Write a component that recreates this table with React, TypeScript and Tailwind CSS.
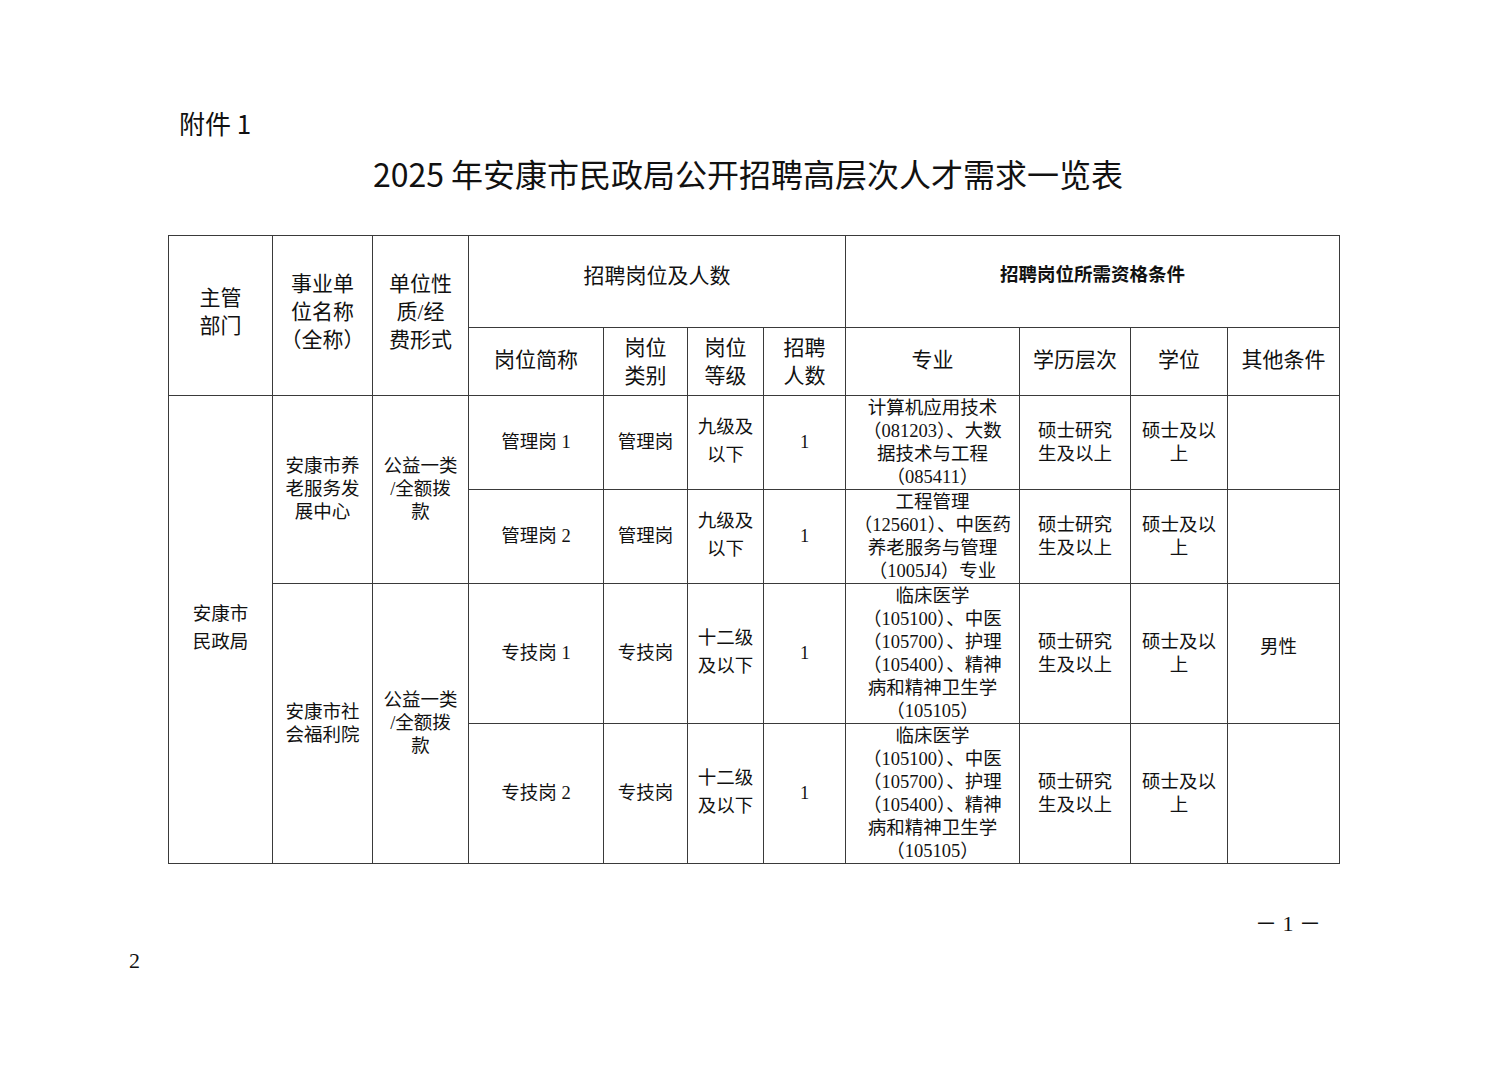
const serif = { fontFamily: '"Liberation Serif", "Noto Sans CJK SC", serif' };

const cell = "border border-[#3a3a3a] text-center align-middle p-0";

function Lines({ lines }: { lines: string[] }) {
  return (
    <>
      {lines.map((l, i) => (
        <div key={i}>{l}</div>
      ))}
    </>
  );
}

const medical = [
  "临床医学",
  "（105100）、中医",
  "（105700）、护理",
  "（105400）、精神",
  "病和精神卫生学",
  "（105105）",
];

export default function App() {
  return (
    <div className="w-full h-[1080px] bg-white text-[#111] overflow-hidden" style={{ fontFamily: '"Noto Sans CJK SC", sans-serif' }}>
      <div className="pt-[103px] pl-[179px] text-[26px] leading-[40px]">附件 1</div>

      <h1 className="mt-[8px] text-center text-[32px] leading-[44px] font-normal pr-[11px]">
        2025 年安康市民政局公开招聘高层次人才需求一览表
      </h1>

      <div className="mt-[40px] pl-[168px]">
        <table className="table-fixed border-collapse w-[1171px] text-[18.5px] leading-[23px]" style={serif}>
          <colgroup>
            <col className="w-[104px]" />
            <col className="w-[100px]" />
            <col className="w-[96px]" />
            <col className="w-[135px]" />
            <col className="w-[84px]" />
            <col className="w-[76px]" />
            <col className="w-[82px]" />
            <col className="w-[174px]" />
            <col className="w-[111px]" />
            <col className="w-[97px]" />
            <col className="w-[112px]" />
          </colgroup>
          <thead>
            <tr className="h-[92px]">
              <th rowSpan={2} className={`${cell} font-normal text-[21px] leading-[28px] pb-[8px]`}>
                <Lines lines={["主管", "部门"]} />
              </th>
              <th rowSpan={2} className={`${cell} font-normal text-[21px] leading-[28px] pb-[8px]`}>
                <Lines lines={["事业单", "位名称", "（全称）"]} />
              </th>
              <th rowSpan={2} className={`${cell} font-normal text-[21px] leading-[28px] pb-[8px]`}>
                <Lines lines={["单位性", "质/经", "费形式"]} />
              </th>
              <th colSpan={4} className={`${cell} font-normal text-[21px] leading-[28px] pb-[12px]`}>
                招聘岗位及人数
              </th>
              <th colSpan={4} className={`${cell} font-bold text-[18.5px] pb-[12px]`}>
                招聘岗位所需资格条件
              </th>
            </tr>
            <tr className="h-[68px] text-[21px] leading-[28px]">
              <th className={`${cell} font-normal pb-[4px]`}>岗位简称</th>
              <th className={`${cell} font-normal`}>
                <Lines lines={["岗位", "类别"]} />
              </th>
              <th className={`${cell} font-normal`}>
                <Lines lines={["岗位", "等级"]} />
              </th>
              <th className={`${cell} font-normal`}>
                <Lines lines={["招聘", "人数"]} />
              </th>
              <th className={`${cell} font-normal pb-[4px]`}>专业</th>
              <th className={`${cell} font-normal pb-[4px]`}>学历层次</th>
              <th className={`${cell} font-normal pb-[4px]`}>学位</th>
              <th className={`${cell} font-normal pb-[4px]`}>其他条件</th>
            </tr>
          </thead>
          <tbody>
            <tr className="h-[94px]">
              <td rowSpan={4} className={`${cell} leading-[28px] pb-[4px]`}>
                <Lines lines={["安康市", "民政局"]} />
              </td>
              <td rowSpan={2} className={cell}>
                <Lines lines={["安康市养", "老服务发", "展中心"]} />
              </td>
              <td rowSpan={2} className={cell}>
                <Lines lines={["公益一类", "/全额拨", "款"]} />
              </td>
              <td className={cell}>管理岗 1</td>
              <td className={cell}>管理岗</td>
              <td className={`${cell} leading-[28px] pb-[4px]`}>
                <Lines lines={["九级及", "以下"]} />
              </td>
              <td className={cell}>1</td>
              <td className={cell}>
                <Lines lines={["计算机应用技术", "（081203）、大数", "据技术与工程", "（085411）"]} />
              </td>
              <td className={cell}>
                <Lines lines={["硕士研究", "生及以上"]} />
              </td>
              <td className={cell}>
                <Lines lines={["硕士及以", "上"]} />
              </td>
              <td className={cell}></td>
            </tr>
            <tr className="h-[94px]">
              <td className={cell}>管理岗 2</td>
              <td className={cell}>管理岗</td>
              <td className={`${cell} leading-[28px] pb-[4px]`}>
                <Lines lines={["九级及", "以下"]} />
              </td>
              <td className={cell}>1</td>
              <td className={cell}>
                <Lines lines={["工程管理", "（125601）、中医药", "养老服务与管理", "（1005J4）专业"]} />
              </td>
              <td className={cell}>
                <Lines lines={["硕士研究", "生及以上"]} />
              </td>
              <td className={cell}>
                <Lines lines={["硕士及以", "上"]} />
              </td>
              <td className={cell}></td>
            </tr>
            <tr className="h-[140px]">
              <td rowSpan={2} className={cell}>
                <Lines lines={["安康市社", "会福利院"]} />
              </td>
              <td rowSpan={2} className={cell}>
                <Lines lines={["公益一类", "/全额拨", "款"]} />
              </td>
              <td className={cell}>专技岗 1</td>
              <td className={cell}>专技岗</td>
              <td className={`${cell} leading-[28px] pb-[4px]`}>
                <Lines lines={["十二级", "及以下"]} />
              </td>
              <td className={cell}>1</td>
              <td className={cell}>
                <Lines lines={medical} />
              </td>
              <td className={cell}>
                <Lines lines={["硕士研究", "生及以上"]} />
              </td>
              <td className={cell}>
                <Lines lines={["硕士及以", "上"]} />
              </td>
              <td className={`${cell} pb-[12px] pr-[10px]`}>男性</td>
            </tr>
            <tr className="h-[140px]">
              <td className={cell}>专技岗 2</td>
              <td className={cell}>专技岗</td>
              <td className={`${cell} leading-[28px] pb-[4px]`}>
                <Lines lines={["十二级", "及以下"]} />
              </td>
              <td className={cell}>1</td>
              <td className={cell}>
                <Lines lines={medical} />
              </td>
              <td className={cell}>
                <Lines lines={["硕士研究", "生及以上"]} />
              </td>
              <td className={cell}>
                <Lines lines={["硕士及以", "上"]} />
              </td>
              <td className={cell}></td>
            </tr>
          </tbody>
        </table>
      </div>

      <div className="mt-[46px] flex justify-end pr-[186px] text-[22px] leading-[28px]" style={serif}>
        <span>－ 1 －</span>
      </div>
      <div className="mt-[9px] pl-[129px] text-[22px] leading-[28px]" style={serif}>
        2
      </div>
    </div>
  );
}
